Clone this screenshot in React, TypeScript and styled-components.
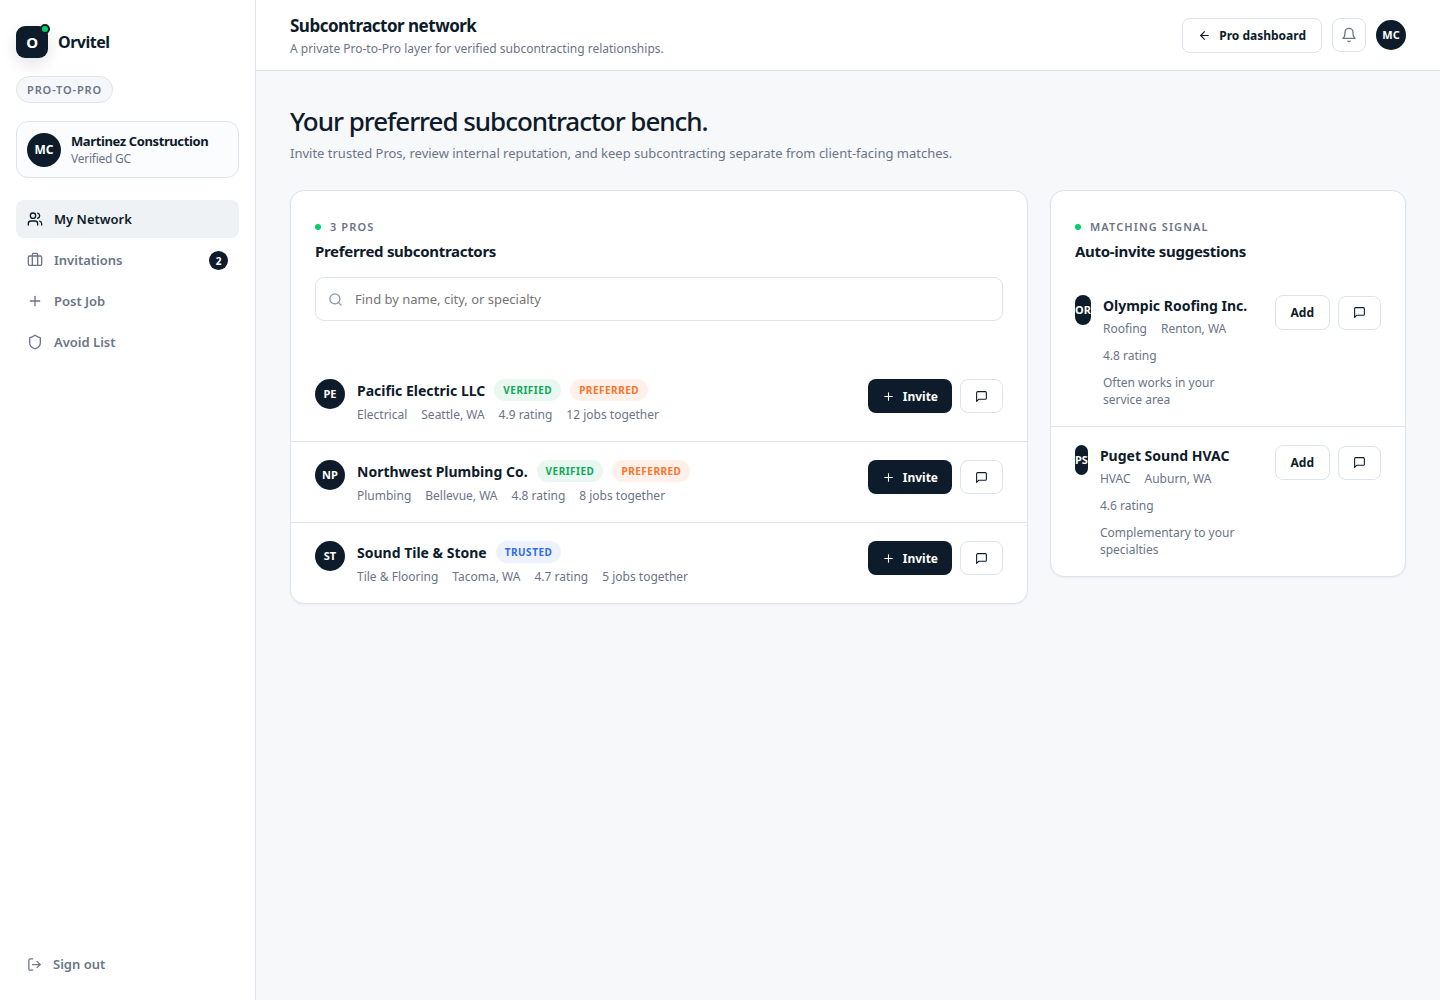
import React from 'react';
import styled, { createGlobalStyle } from 'styled-components';
import { ArrowLeft, Briefcase, LogOut, Plus, Search, Shield, Users } from 'lucide-react';

const ink = '#0d1b2a';
const muted = '#6b7489';
const line = '#dde3ee';
const green = '#00d166';

const GlobalStyle = createGlobalStyle`
  *, *::before, *::after { box-sizing: border-box; }
  body {
    margin: 0;
    background: #f7f8fa;
    color: ${ink};
    font-family: 'Noto Sans', sans-serif;
    font-size: 14px;
    line-height: 20px;
  }
  h1, h2, h3, p, ul { margin: 0; padding: 0; }
  ul { list-style: none; }
  button, input { font: inherit; color: inherit; }
  button { cursor: pointer; }
`;

const Shell = styled.div`
  display: grid;
  grid-template-columns: 256px minmax(0, 1fr);
  min-height: 100vh;
`;

const Sidebar = styled.aside`
  display: flex;
  flex-direction: column;
  align-items: stretch;
  padding: 26px 16px 16px;
  background: #fff;
  border-right: 1px solid ${line};
`;

const Brand = styled.a`
  display: flex;
  align-items: center;
  gap: 10px;
  color: ${ink};
  font-size: 16px;
  font-weight: 700;
  letter-spacing: -0.03em;
  text-decoration: none;
`;

const BrandMark = styled.span`
  position: relative;
  display: grid;
  place-items: center;
  width: 32px;
  height: 32px;
  border-radius: 9px;
  background: ${ink};
  color: #fff;
  font-size: 15px;
  box-shadow: 0 6px 16px rgba(13, 27, 42, 0.12);

  &::after {
    content: '';
    position: absolute;
    top: -2px;
    right: -2px;
    width: 10px;
    height: 10px;
    border: 2px solid ${ink};
    border-radius: 50%;
    background: ${green};
  }
`;

const ContextPill = styled.span`
  align-self: flex-start;
  margin-top: 18px;
  padding: 5px 10px;
  border: 1px solid ${line};
  border-radius: 999px;
  background: #f5f7fa;
  color: ${muted};
  font-size: 11px;
  font-weight: 600;
  line-height: 15px;
  letter-spacing: 0.08em;
`;

const Account = styled.div`
  display: flex;
  align-items: center;
  gap: 10px;
  margin-top: 18px;
  padding: 10px;
  border: 1px solid ${line};
  border-radius: 12px;
  background: #fbfcfe;
`;

const AccountName = styled.div`
  font-size: 13px;
  font-weight: 700;
  line-height: 18px;
  letter-spacing: -0.03em;
`;

const AccountRole = styled.div`
  color: ${muted};
  font-size: 12px;
  line-height: 17px;
  letter-spacing: -0.02em;
`;

const Avatar = styled.span<{ $large?: boolean }>`
  display: grid;
  place-items: center;
  width: ${(p) => (p.$large ? 34 : 30)}px;
  height: ${(p) => (p.$large ? 34 : 30)}px;
  border-radius: 999px;
  background: ${ink};
  color: #fff;
  font-size: ${(p) => (p.$large ? 12 : 11)}px;
  font-weight: 700;
`;

const Nav = styled.nav`
  display: grid;
  gap: 3px;
  margin-top: 22px;
`;

const NavLink = styled.a<{ $active?: boolean }>`
  display: flex;
  align-items: center;
  gap: 11px;
  height: 38px;
  padding: 0 11px;
  border-radius: 8px;
  background: ${(p) => (p.$active ? '#eef2f5' : 'transparent')};
  color: ${(p) => (p.$active ? ink : muted)};
  font-size: 13px;
  font-weight: 600;
  text-decoration: none;
`;

const Count = styled.span`
  display: grid;
  place-items: center;
  width: 19px;
  height: 19px;
  margin-left: auto;
  border-radius: 50%;
  background: ${ink};
  color: #fff;
  font-size: 10px;
  font-weight: 700;
`;

const SignOut = styled.button`
  display: flex;
  align-items: center;
  gap: 11px;
  height: 40px;
  margin-top: auto;
  padding: 0 11px;
  border: 0;
  background: transparent;
  color: ${muted};
  font-size: 13px;
  font-weight: 600;
`;

const Topbar = styled.header`
  display: flex;
  align-items: center;
  justify-content: space-between;
  height: 71px;
  padding: 0 34px;
  background: #fff;
  border-bottom: 1px solid ${line};
`;

const TopTitle = styled.h2`
  margin-top: 3px;
  font-size: 17px;
  font-weight: 700;
  line-height: 24px;
  letter-spacing: -0.03em;
`;

const TopNote = styled.p`
  color: ${muted};
  font-size: 12px;
  line-height: 22px;
`;

const Tools = styled.div`
  display: flex;
  align-items: center;
  gap: 10px;
`;

const Button = styled.button<{ $primary?: boolean }>`
  display: inline-flex;
  align-items: center;
  justify-content: center;
  gap: 8px;
  min-height: 34px;
  padding: ${(p) => (p.$primary ? '8px 14px' : '8px 15px')};
  border: ${(p) => (p.$primary ? '0' : `1px solid ${line}`)};
  border-radius: 8px;
  background: ${(p) => (p.$primary ? ink : '#fff')};
  color: ${(p) => (p.$primary ? '#fff' : ink)};
  font-size: 12px;
  font-weight: 700;
  line-height: 17px;
`;

const IconButton = styled.button<{ $wide?: boolean }>`
  display: grid;
  place-items: center;
  width: ${(p) => (p.$wide ? 43 : 34)}px;
  height: 34px;
  padding: 0;
  border: 1px solid ${line};
  border-radius: 8px;
  background: #fff;
  color: ${(p) => (p.$wide ? ink : muted)};
`;

const Content = styled.main`
  padding: 34px;
`;

const PageTitle = styled.h1`
  font-size: 26px;
  font-weight: 500;
  line-height: 32px;
  letter-spacing: -0.04em;
`;

const PageNote = styled.p`
  margin-top: 6px;
  color: ${muted};
  font-size: 13px;
  line-height: 20px;
`;

const Columns = styled.div`
  display: grid;
  grid-template-columns: minmax(0, 1fr) 356px;
  align-items: start;
  gap: 22px;
  margin-top: 27px;
`;

const Panel = styled.section`
  border: 1px solid ${line};
  border-radius: 14px;
  background: #fff;
  box-shadow: 0 1px 2px rgba(13, 27, 42, 0.05);
`;

const PanelHead = styled.div`
  padding: 28px 24px 16px;
`;

const Eyebrow = styled.div`
  display: flex;
  align-items: center;
  gap: 9px;
  color: ${muted};
  font-size: 11px;
  font-weight: 600;
  line-height: 16px;
  letter-spacing: 0.1em;

  &::before {
    content: '';
    width: 6px;
    height: 6px;
    border-radius: 50%;
    background: ${green};
  }
`;

const PanelTitle = styled.h3`
  margin-top: 6px;
  font-size: 15px;
  font-weight: 700;
  line-height: 20px;
  letter-spacing: -0.02em;
`;

const SearchField = styled.label`
  display: flex;
  align-items: center;
  gap: 12px;
  height: 44px;
  margin: 0 24px 40px;
  padding: 0 12px;
  border: 1px solid ${line};
  border-radius: 9px;
  color: #8492a8;
`;

const SearchInput = styled.input`
  flex: 1;
  min-width: 0;
  padding: 0;
  border: 0;
  outline: 0;
  background: transparent;
  color: ${ink};
  font-size: 13px;

  &::placeholder { color: #757575; }
`;

const Row = styled.li`
  display: flex;
  align-items: flex-start;
  gap: 12px;
  padding: 18px 24px;

  & + & { border-top: 1px solid ${line}; }
`;

const Body = styled.div`
  flex: 0 1 auto;
  min-width: 0;
  padding-right: 12px;
`;

const NameLine = styled.div`
  display: flex;
  flex-wrap: wrap;
  align-items: center;
  gap: 9px;
  padding-bottom: 1px;
`;

const Name = styled.strong`
  display: block;
  font-size: 14px;
  font-weight: 700;
  line-height: 21px;
`;

const tones = {
  verified: { bg: '#e8f7f0', fg: '#10a85a' },
  preferred: { bg: '#fff1ea', fg: '#f97328' },
  trusted: { bg: '#edf2fe', fg: '#2f6be6' },
};
type Tone = keyof typeof tones;

const Tag = styled.span<{ $tone: Tone }>`
  padding: 3px 9px;
  border-radius: 999px;
  background: ${(p) => tones[p.$tone].bg};
  color: ${(p) => tones[p.$tone].fg};
  font-size: 10px;
  font-weight: 700;
  line-height: 16px;
  letter-spacing: 0.05em;
  text-transform: uppercase;
`;

const Meta = styled.div`
  display: flex;
  flex-wrap: wrap;
  gap: 10px 14px;
  margin-top: 4px;
  color: ${muted};
  font-size: 12px;
  line-height: 17px;
`;

const Actions = styled.div`
  display: flex;
  flex-shrink: 0;
  align-items: center;
  gap: 8px;
  margin-left: auto;
`;

const Stroke = ({ size, children }: { size: number; children: React.ReactNode }) => (
  <svg width={size} height={size} viewBox="0 0 24 24" fill="none" stroke="currentColor" strokeWidth="2" strokeLinecap="round" strokeLinejoin="round" aria-hidden="true">
    {children}
  </svg>
);

const MessageIcon = () => (
  <Stroke size={13}>
    <path d="M21 15a2 2 0 0 1-2 2H7l-4 4V5a2 2 0 0 1 2-2h14a2 2 0 0 1 2 2z" />
  </Stroke>
);

const BellIcon = () => (
  <Stroke size={16}>
    <path d="M6 8a6 6 0 0 1 12 0c0 7 3 9 3 9H3s3-2 3-9" />
    <path d="M10.3 21a1.94 1.94 0 0 0 3.4 0" />
  </Stroke>
);

const nav = [
  { label: 'My Network', Icon: Users, active: true },
  { label: 'Invitations', Icon: Briefcase, count: 2 },
  { label: 'Post Job', Icon: Plus },
  { label: 'Avoid List', Icon: Shield },
];

const preferred: { initials: string; name: string; tags: Tone[]; meta: string[] }[] = [
  { initials: 'PE', name: 'Pacific Electric LLC', tags: ['verified', 'preferred'], meta: ['Electrical', 'Seattle, WA', '4.9 rating', '12 jobs together'] },
  { initials: 'NP', name: 'Northwest Plumbing Co.', tags: ['verified', 'preferred'], meta: ['Plumbing', 'Bellevue, WA', '4.8 rating', '8 jobs together'] },
  { initials: 'ST', name: 'Sound Tile & Stone', tags: ['trusted'], meta: ['Tile & Flooring', 'Tacoma, WA', '4.7 rating', '5 jobs together'] },
];

const suggestions = [
  { initials: 'OR', name: 'Olympic Roofing Inc.', meta: ['Roofing', 'Renton, WA', '4.8 rating', 'Often works in your service area'] },
  { initials: 'PS', name: 'Puget Sound HVAC', meta: ['HVAC', 'Auburn, WA', '4.6 rating', 'Complementary to your specialties'] },
];

export default function App() {
  return (
    <>
      <GlobalStyle />
      <Shell>
        <Sidebar>
          <Brand href="#">
            <BrandMark>O</BrandMark>
            Orvitel
          </Brand>
          <ContextPill>PRO-TO-PRO</ContextPill>
          <Account>
            <Avatar $large>MC</Avatar>
            <div>
              <AccountName>Martinez Construction</AccountName>
              <AccountRole>Verified GC</AccountRole>
            </div>
          </Account>
          <Nav>
            {nav.map(({ label, Icon, active, count }) => (
              <NavLink key={label} href="#" $active={active}>
                <Icon size={16} strokeWidth={2} />
                {label}
                {count && <Count>{count}</Count>}
              </NavLink>
            ))}
          </Nav>
          <SignOut type="button">
            <LogOut size={15} />
            Sign out
          </SignOut>
        </Sidebar>
        <div>
          <Topbar>
            <div>
              <TopTitle>Subcontractor network</TopTitle>
              <TopNote>A private Pro-to-Pro layer for verified subcontracting relationships.</TopNote>
            </div>
            <Tools>
              <Button type="button">
                <ArrowLeft size={13} />
                Pro dashboard
              </Button>
              <IconButton type="button" aria-label="Notifications">
                <BellIcon />
              </IconButton>
              <Avatar>MC</Avatar>
            </Tools>
          </Topbar>
          <Content>
            <PageTitle>Your preferred subcontractor bench.</PageTitle>
            <PageNote>Invite trusted Pros, review internal reputation, and keep subcontracting separate from client-facing matches.</PageNote>
            <Columns>
              <Panel>
                <PanelHead>
                  <Eyebrow>3 PROS</Eyebrow>
                  <PanelTitle>Preferred subcontractors</PanelTitle>
                </PanelHead>
                <SearchField>
                  <Search size={15} />
                  <SearchInput type="search" aria-label="Find subcontractors" placeholder="Find by name, city, or specialty" />
                </SearchField>
                <ul>
                  {preferred.map((pro) => (
                    <Row key={pro.name}>
                      <Avatar>{pro.initials}</Avatar>
                      <Body>
                        <NameLine>
                          <Name>{pro.name}</Name>
                          {pro.tags.map((tag) => (
                            <Tag key={tag} $tone={tag}>{tag}</Tag>
                          ))}
                        </NameLine>
                        <Meta>{pro.meta.map((m) => <span key={m}>{m}</span>)}</Meta>
                      </Body>
                      <Actions>
                        <Button type="button" $primary>
                          <Plus size={13} />
                          Invite
                        </Button>
                        <IconButton type="button" $wide aria-label={`Message ${pro.name}`}>
                          <MessageIcon />
                        </IconButton>
                      </Actions>
                    </Row>
                  ))}
                </ul>
              </Panel>
              <Panel>
                <PanelHead>
                  <Eyebrow>MATCHING SIGNAL</Eyebrow>
                  <PanelTitle>Auto-invite suggestions</PanelTitle>
                </PanelHead>
                <ul>
                  {suggestions.map((pro) => (
                    <Row key={pro.name}>
                      <Avatar>{pro.initials}</Avatar>
                      <Body>
                        <Name>{pro.name}</Name>
                        <Meta>{pro.meta.map((m) => <span key={m}>{m}</span>)}</Meta>
                      </Body>
                      <Actions>
                        <Button type="button">Add</Button>
                        <IconButton type="button" $wide aria-label={`Message ${pro.name}`}>
                          <MessageIcon />
                        </IconButton>
                      </Actions>
                    </Row>
                  ))}
                </ul>
              </Panel>
            </Columns>
          </Content>
        </div>
      </Shell>
    </>
  );
}
